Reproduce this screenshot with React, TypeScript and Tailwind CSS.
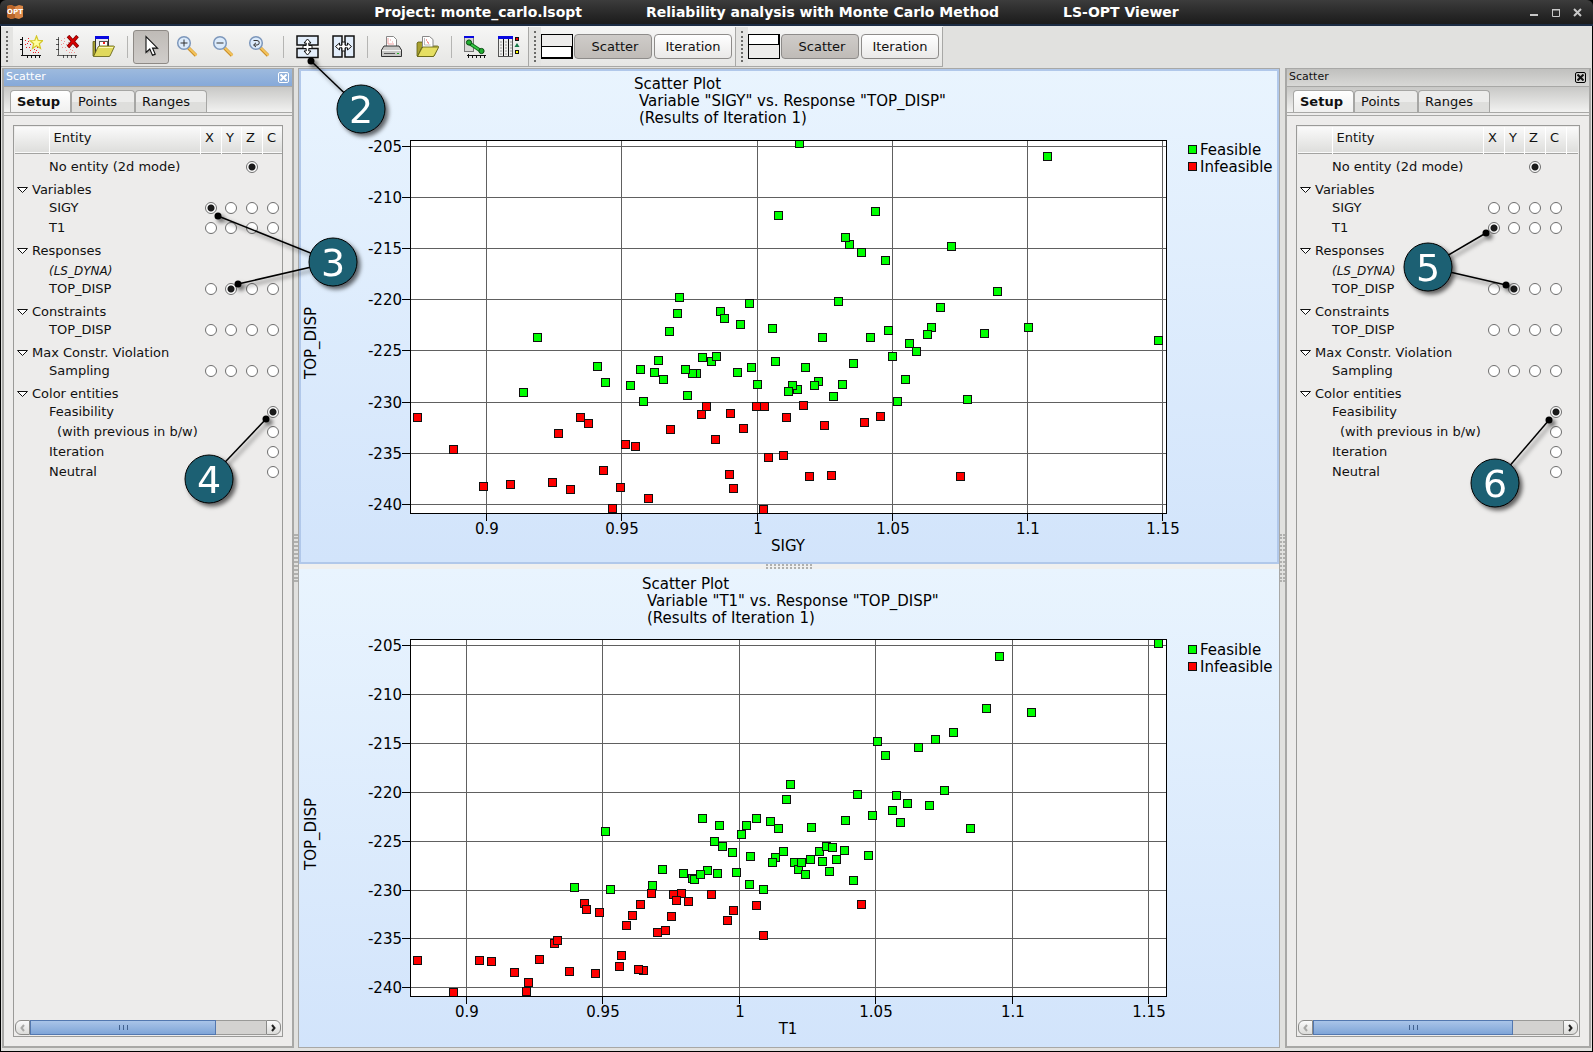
import React, { useState } from 'react';

type Point = [number, number];

interface Tick {
  pos: number;
  label: string;
}

interface ScatterPlotProps {
  title: string[];
  titleX: number;
  titleY: number;
  legendY: number;
  xLabel: string;
  width: number;
  height: number;
  originY: number;
  viewHeight: number;
  xTicks: Tick[];
  yTicks: Tick[];
  feasible: Point[];
  infeasible: Point[];
}

// Marker positions are relative to the top left corner of the plot frame
const SIGY_FEASIBLE: Point[] = [
  [389, 3], [368, 75], [269, 157], [267, 173], [259, 191], [127, 197], [339, 163], [310, 171],
  [314, 178], [330, 184], [362, 188], [248, 220], [187, 226], [195, 242], [230, 229], [244, 232],
  [220, 245], [253, 239], [113, 252], [233, 261], [286, 233], [282, 233], [275, 229], [301, 221],
  [292, 217], [306, 216], [327, 232], [341, 227], [347, 244], [365, 221], [277, 255], [387, 249],
  [382, 245], [378, 251], [637, 16], [465, 71], [439, 104], [435, 97], [451, 112], [475, 120],
  [541, 106], [587, 151], [428, 161], [530, 167], [521, 187], [517, 194], [478, 190], [412, 197],
  [460, 197], [499, 203], [506, 211], [574, 193], [618, 187], [748, 200], [482, 216], [443, 223],
  [395, 227], [408, 241], [404, 245], [432, 244], [423, 256], [495, 239], [487, 261], [557, 259],
];

const SIGY_INFEASIBLE: Point[] = [
  [7, 277], [43, 309], [73, 346], [100, 344], [148, 293], [170, 277], [178, 283], [142, 342],
  [160, 349], [193, 330], [215, 304], [225, 306], [210, 347], [202, 368], [238, 358], [260, 289],
  [291, 274], [296, 266], [320, 273], [305, 299], [333, 288], [346, 266], [354, 266], [376, 277],
  [373, 315], [358, 317], [319, 334], [323, 348], [353, 369], [393, 265], [414, 285], [454, 282],
  [470, 276], [399, 336], [421, 335], [550, 336],
];

const T1_FEASIBLE: Point[] = [
  [380, 145], [376, 160], [292, 179], [309, 186], [346, 179], [336, 186], [360, 182], [368, 189],
  [331, 195], [195, 192], [304, 202], [312, 207], [322, 213], [340, 217], [365, 218], [373, 212],
  [362, 223], [252, 230], [273, 234], [282, 239], [284, 240], [297, 231], [290, 235], [307, 234],
  [326, 233], [164, 248], [200, 250], [242, 246], [339, 245], [353, 250], [384, 223], [388, 230],
  [391, 223], [395, 235], [589, 17], [748, 4], [576, 69], [621, 73], [543, 93], [525, 100],
  [508, 108], [467, 102], [475, 116], [447, 155], [486, 156], [497, 164], [534, 151], [519, 166],
  [482, 171], [462, 176], [490, 183], [435, 181], [401, 188], [560, 189], [409, 212], [416, 207],
  [422, 208], [434, 211], [400, 220], [412, 222], [426, 220], [458, 216], [419, 232], [443, 241],
];

const T1_INFEASIBLE: Point[] = [
  [7, 321], [43, 353], [69, 321], [81, 322], [104, 333], [118, 343], [116, 352], [129, 320],
  [144, 304], [147, 301], [159, 332], [185, 334], [174, 264], [176, 270], [189, 273], [209, 327],
  [211, 316], [233, 331], [228, 330], [216, 286], [222, 276], [230, 265], [241, 254], [255, 291],
  [247, 293], [261, 277], [263, 255], [271, 254], [266, 261], [278, 262], [301, 255], [317, 281],
  [323, 271], [346, 266], [353, 296], [451, 265],
];

const Y_LABELS = ['-205', '-210', '-215', '-220', '-225', '-230', '-235', '-240'];
const X_LABELS = ['0.9', '0.95', '1', '1.05', '1.1', '1.15'];

const makeTicks = (labels: string[], positions: number[]): Tick[] =>
  labels.map((label, i) => ({ label, pos: positions[i] }));

const ScatterPlot: React.FC<ScatterPlotProps> = ({
  title, titleX, titleY, legendY, xLabel, width, height, originY, viewHeight, xTicks, yTicks, feasible, infeasible,
}) => {
  const clipId = `clip-${xLabel}`;

  const renderMarkers = (points: Point[], fill: string) =>
    points.map(([x, y], i) => (
      <rect key={i} x={x - 3.5} y={y - 3.5} width={8} height={8} fill={fill} stroke="#101010" />
    ));

  return (
    <svg
      viewBox={`-109 ${-originY} 976 ${viewHeight}`}
      className="block h-full w-full text-[15px]"
      role="img"
      aria-label={title.join(' ')}
    >
      <defs>
        <clipPath id={clipId}>
          <rect x={0} y={0} width={width + 1} height={height + 1} />
        </clipPath>
      </defs>

      {title.map((line, i) => (
        <text key={line} x={titleX + (i > 0 ? 5 : 0)} y={titleY + i * 17}>{line}</text>
      ))}

      <rect x={0.5} y={0.5} width={width} height={height} fill="#fff" />
      <g stroke="#606060">
        {xTicks.map(t => <line key={t.label} x1={t.pos + 0.5} x2={t.pos + 0.5} y1={0} y2={height} />)}
        {yTicks.map(t => <line key={t.label} y1={t.pos + 0.5} y2={t.pos + 0.5} x1={0} x2={width} />)}
      </g>
      <g clipPath={`url(#${clipId})`}>
        {renderMarkers(infeasible, '#f00')}
        {renderMarkers(feasible, '#0f0')}
      </g>
      <g stroke="#000">
        <rect x={0.5} y={0.5} width={width} height={height} fill="none" />
        {xTicks.map(t => <line key={t.label} x1={t.pos + 0.5} x2={t.pos + 0.5} y1={height} y2={height + 8} />)}
        {yTicks.map(t => <line key={t.label} y1={t.pos + 0.5} y2={t.pos + 0.5} x1={-8} x2={0} />)}
      </g>

      <g textAnchor="middle">
        {xTicks.map(t => <text key={t.label} x={t.pos + 1} y={height + 21}>{t.label}</text>)}
        <text x={378} y={height + 38}>{xLabel}</text>
        <text transform={`translate(-94 ${Math.round(height / 2) + 16}) rotate(-90)`}>TOP_DISP</text>
      </g>
      <g textAnchor="end">
        {yTicks.map(t => <text key={t.label} x={-8} y={t.pos + 6}>{t.label}</text>)}
      </g>

      <rect x={778.5} y={legendY + 0.5} width={8} height={8} fill="#0f0" stroke="#101010" />
      <text x={790} y={legendY + 10}>Feasible</text>
      <rect x={778.5} y={legendY + 17.5} width={8} height={8} fill="#f00" stroke="#101010" />
      <text x={790} y={legendY + 27}>Infeasible</text>
    </svg>
  );
};

interface EntityRow {
  label: string;
  kind?: 'group' | 'note' | 'none';
  indent?: boolean;
  columns?: string;
}

const ROWS: EntityRow[] = [
  { label: 'No entity (2d mode)', kind: 'none', columns: 'Z' },
  { label: 'Variables', kind: 'group' },
  { label: 'SIGY', columns: 'XYZC' },
  { label: 'T1', columns: 'XYZC' },
  { label: 'Responses', kind: 'group' },
  { label: '(LS_DYNA)', kind: 'note' },
  { label: 'TOP_DISP', columns: 'XYZC' },
  { label: 'Constraints', kind: 'group' },
  { label: 'TOP_DISP', columns: 'XYZC' },
  { label: 'Max Constr. Violation', kind: 'group' },
  { label: 'Sampling', columns: 'XYZC' },
  { label: 'Color entities', kind: 'group' },
  { label: 'Feasibility', columns: 'C' },
  { label: '(with previous in b/w)', indent: true, columns: 'C' },
  { label: 'Iteration', columns: 'C' },
  { label: 'Neutral', columns: 'C' },
];

const AXES = ['X', 'Y', 'Z', 'C'];

interface EntityTableProps {
  id: string;
  initial: Record<string, number>;
}

const EntityTable: React.FC<EntityTableProps> = ({ id, initial }) => {
  const [selected, setSelected] = useState<Record<string, number>>(initial);

  return (
    <table className="w-full table-fixed border-collapse">
      <colgroup>
        <col className="w-[34px]" />
        <col className="w-[151px]" />
        <col className="w-[21px]" />
        <col className="w-[20px]" />
        <col className="w-[21px]" />
        <col className="w-[21px]" />
        <col />
      </colgroup>
      <thead>
        <tr className="h-[26px] border-b border-[#a3a3a1] bg-linear-to-b from-[#fafafa] to-[#dededc] leading-4">
          <th className="p-0" />
          <th className="border-l border-white p-0 pb-1 pl-1 text-left font-normal">Entity</th>
          {AXES.map(axis => (
            <th key={axis} className="border-l border-white p-0 pr-[2px] pb-1 text-center font-normal">{axis}</th>
          ))}
          <th className="border-l border-white p-0" />
        </tr>
      </thead>
      <tbody>
        {ROWS.map((row, index) => {
          if (row.kind === 'group') {
            return (
              <tr key={index} className="h-[21px]">
                <td colSpan={7} className="p-0 pt-1 leading-4">
                  <button className="flex items-center gap-[3px] pl-px">
                    <svg viewBox="0 0 13 8" className="h-2 w-[13px]" fill="#fff" stroke="#111">
                      <path d="M1.5 1.5h10l-5 5z" />
                    </svg>
                    {row.label}
                  </button>
                </td>
              </tr>
            );
          }
          return (
            <tr key={index} className={row.kind === 'none' ? 'h-6' : 'h-5'}>
              <td className="p-0" />
              <th
                scope="row"
                className={`overflow-visible p-0 text-left font-normal leading-4 whitespace-nowrap ${row.indent ? 'pl-2' : ''} ${row.kind === 'none' ? 'pt-1' : ''} ${row.kind === 'note' ? 'pt-1 text-[12px] italic' : ''}`}
              >
                {row.label}
              </th>
              {AXES.map(axis => (
                <td key={axis} className={`p-0 ${row.kind === 'none' ? 'pt-1' : ''}`}>
                  {row.columns?.includes(axis) && (
                    <input
                      type="radio"
                      name={`${id}-${axis}`}
                      aria-label={`${row.label} ${axis}`}
                      checked={selected[axis] === index}
                      onChange={() => setSelected({ ...selected, [axis]: index })}
                      className="mx-auto block size-3 appearance-none rounded-full border border-[#6e6e6e] bg-white checked:bg-[radial-gradient(circle,#1a1a1a_3px,#fff_4px)]"
                    />
                  )}
                </td>
              ))}
              <td className="p-0" />
            </tr>
          );
        })}
      </tbody>
    </table>
  );
};

interface DockProps {
  id: string;
  active?: boolean;
  className: string;
  thumbClass: string;
  initial: Record<string, number>;
}

const Dock: React.FC<DockProps> = ({ id, active, className, thumbClass, initial }) => {
  const tabClass = 'h-[22px] rounded-t border border-b-0 border-[#a6a6a4] text-left';
  const idleTab = 'bg-linear-to-b from-[#ececeb] from-50% to-[#dededc] to-50%';

  return (
    <aside className={`flex flex-shrink-0 flex-col border-2 border-t border-[#a8a8a6] bg-[#edeceb] ${className}`}>
      <div
        className={`flex h-[17px] items-center justify-between pr-[3px] pb-px pl-[2px] text-[11px] ${
          active
            ? 'bg-linear-to-b from-[#9dbade] to-[#86a9d9] text-white'
            : 'bg-linear-to-b from-[#c0c0be] to-[#d8d8d6] text-[#111]'
        }`}
      >
        <span>Scatter</span>
        <button
          aria-label="Close panel"
          className={`flex size-[11px] items-center justify-center rounded-xs border ${active ? 'border-white' : 'border-black'}`}
        >
          <svg viewBox="0 0 7 7" className="size-[7px]" stroke="currentColor" strokeWidth="2">
            <path d="M.5.5l6 6M6.500.5l-6 6" />
          </svg>
        </button>
      </div>
      <div role="tablist" className="flex h-[27px] items-end border-t border-b border-[#a8a8a6] bg-linear-to-b from-[#c8c8c6] to-[#f2f2f1] pl-[6px]">
        <button role="tab" aria-selected="true" className={`${tabClass} w-[61px] bg-linear-to-b from-white to-[#f0f0ef] pl-[6px] font-bold`}>
          Setup
        </button>
        <button role="tab" aria-selected="false" className={`${tabClass} ${idleTab} w-16 pl-[6px]`}>Points</button>
        <button role="tab" aria-selected="false" className={`${tabClass} ${idleTab} w-[72px] pl-[6px]`}>Ranges</button>
      </div>
      <div className="h-[3px] border-b border-[#a8a8a6]" />
      <div className="flex min-h-0 flex-1 flex-col px-[9px] pt-[9px] pb-[9px]">
        <div className="flex min-h-0 flex-1 flex-col overflow-hidden border border-[#9a9a98] p-px">
          <EntityTable id={id} initial={initial} />
          <div className="mt-auto flex h-[15px]">
            <button aria-label="Scroll left" className="flex w-[15px] items-center justify-center rounded-l-md border border-[#8a8a88] bg-linear-to-b from-[#fafafa] to-[#dcdcda]">
              <svg viewBox="0 0 5 8" className="h-2 w-[5px]" fill="none" stroke="#a8a8a6" strokeWidth="2">
                <path d="M4 1L1.500 4 4 7" />
              </svg>
            </button>
            <div className="flex-1 border-y border-[#9a9a98] bg-[#d3d2d0]">
              <div className={`-my-px flex h-[15px] items-center justify-center gap-[3px] border border-[#5378b0] bg-linear-to-b from-[#a9c4e8] to-[#7fa5d8] ${thumbClass}`}>
                <span className="h-[5px] w-px bg-[#41618f]" />
                <span className="h-[5px] w-px bg-[#41618f]" />
                <span className="h-[5px] w-px bg-[#41618f]" />
              </div>
            </div>
            <button aria-label="Scroll right" className="flex w-[15px] items-center justify-center rounded-r-md border border-[#8a8a88] bg-linear-to-b from-[#fafafa] to-[#dcdcda]">
              <svg viewBox="0 0 5 8" className="h-2 w-[5px]" fill="none" stroke="#222" strokeWidth="2">
                <path d="M1 1l2.500 3L1 7" />
              </svg>
            </button>
          </div>
        </div>
      </div>
    </aside>
  );
};

const Axes: React.FC = () => (
  <path d="M2.500 2v18M1 20.500h20M0 4.500h3M0 9.500h3M0 14.500h3M7.500 20v3M11.500 20v3M15.500 20v3M19.500 20v3" stroke="#111" fill="none" />
);

const RedDots: React.FC<{ color: string }> = ({ color }) => (
  <g fill={color}>
    {[[5, 5], [8, 3], [7, 8], [10, 9], [6, 12], [9, 12], [12, 12], [14, 14], [10, 15], [16, 15], [17, 12], [13, 17], [18, 17], [12, 7], [5, 9], [8, 6], [15, 17]].map(([x, y]) => (
      <rect key={`${x}-${y}`} x={x} y={y} width={1} height={1} />
    ))}
  </g>
);

const iconClass = 'size-[23px]';

const NewPlotIcon: React.FC = () => (
  <svg viewBox="0 0 23 23" className={iconClass}>
    <Axes />
    <RedDots color="#f02020" />
    <path d="M16.500 1l1.700 4.500 4.600.2-3.500 3 1.200 4.800-4-2.700-4 2.700 1.200-4.800-3.500-3 4.600-.2z" fill="#ffffa0" stroke="#d4c72a" strokeWidth="1.200" />
  </svg>
);

const DeletePlotIcon: React.FC = () => (
  <svg viewBox="0 0 23 23" className={iconClass}>
    <g opacity=".65"><Axes /></g>
    <RedDots color="#f29090" />
    <path d="M12 1l10 11M21.500 1L12 12" stroke="#7a0000" strokeWidth="3.500" fill="none" />
    <path d="M12.500 1.500l9 10M21 1.500l-8.500 10" stroke="#d80000" strokeWidth="2" fill="none" />
  </svg>
);

const Folder: React.FC = () => (
  <g stroke="#5c5a10" strokeWidth=".8">
    <path d="M1 21V8l1-1h4l1 2h9v12z" fill="#a8a030" />
    <path d="M1.500 21.500L6 12l1-1h14.500l1 .5L18 21l-1 .5z" fill="#e6df62" />
    <path d="M7 12.500h14" stroke="#fbf8b8" />
  </g>
);

const OpenPlotIcon: React.FC = () => (
  <svg viewBox="0 0 23 23" className={iconClass}>
    <path d="M1 21V6.500h3V20z" fill="#a8a030" stroke="#5c5a10" strokeWidth=".8" />
    <rect x={3.500} y={1.500} width={13} height={16} fill="#e8e8f0" stroke="#333" />
    <rect x={3} y={1} width={14} height={3} fill="#0808e0" />
    <rect x={7.500} y={6.500} width={8} height={7} fill="#fff" stroke="#555" />
    <rect x={11} y={7} width={2} height={2} fill="#f02020" />
    <path d="M1.500 21.500L6 12l1-1h14.500l1 .5L18 21l-1 .5z" fill="#e0d95c" stroke="#5c5a10" strokeWidth=".8" />
    <path d="M7 12.500h14" stroke="#fbf8b8" />
  </svg>
);

const CursorIcon: React.FC = () => (
  <svg viewBox="0 0 23 23" className={iconClass}>
    <path d="M7 3v16l4-3.800 2.600 6 2.600-1.200-2.600-5.700H19z" fill="#888" opacity=".5" />
    <path d="M6 1.500v16l3.800-3.500 2.700 6.300 2.700-1.200-2.700-6H17.500z" fill="#fff" stroke="#111" strokeWidth="1.100" />
  </svg>
);

const ZoomIcon: React.FC<{ children: React.ReactNode }> = ({ children }) => (
  <svg viewBox="0 0 23 23" className={iconClass}>
    <path d="M12 12.500l8 8" stroke="#c98d28" strokeWidth="3.400" />
    <path d="M12.500 12.500l8 8" stroke="#f4c45c" strokeWidth="2" />
    <circle cx={8} cy={8} r={6.300} fill="#dcebfb" stroke="#7d97bb" strokeWidth="1.500" />
    <g stroke="#333" fill="none">{children}</g>
  </svg>
);

const SplitVerticalIcon: React.FC = () => (
  <svg viewBox="0 0 23 24" className="h-6 w-[23px]">
    <rect x={1} y={1} width={21} height={9} fill="#e3eefb" stroke="#111" strokeWidth="1.500" />
    <rect x={1} y={13.500} width={21} height={9} fill="#e3eefb" stroke="#111" strokeWidth="1.500" />
    <path d="M11.500 4l3.500 4h-2.200v2.500H16v3h-3.200V16H15l-3.500 4L8 16h2.200v-2.500H7v-3h3.200V8H8z" fill="#fff" stroke="#111" />
  </svg>
);

const SplitHorizontalIcon: React.FC = () => (
  <svg viewBox="0 0 23 23" className={iconClass}>
    <rect x={1} y={1} width={9} height={21} fill="#e3eefb" stroke="#111" strokeWidth="1.500" />
    <rect x={13} y={1} width={9} height={21} fill="#e3eefb" stroke="#111" strokeWidth="1.500" />
    <path d="M3.500 11.500l4-3.500v2.200H10V7h3v3.200h2.500V8l4 3.500-4 3.500v-2.200H13V16h-3v-3.200H7.500V15z" fill="#fff" stroke="#111" />
  </svg>
);

const PrinterIcon: React.FC = () => (
  <svg viewBox="0 0 23 23" className={iconClass}>
    <path d="M6.500 12V1.500h7l3 3V12z" fill="#fff" stroke="#888" />
    <path d="M8 3v6h6M10 5h1M12 7h1" stroke="#f0a0a0" fill="none" />
    <path d="M4 11h15l2.500 4v6.500h-20V15z" fill="#c9c9c7" stroke="#333" />
    <path d="M2 15.500h19" stroke="#f4f4f4" />
    <path d="M4 18.500h11" stroke="#555" />
    <rect x={17} y={18} width={2} height={1} fill="#1bb01b" />
  </svg>
);

const ExportIcon: React.FC = () => (
  <svg viewBox="0 0 23 23" className={iconClass}>
    <Folder />
    <path d="M6.500 14V1.500h7l3.500 3V14z" fill="#fff" stroke="#888" />
    <path d="M8.500 3v7h6" stroke="#bbb" fill="none" />
    <path d="M10 5h1M12 8h1M11 7h1" stroke="#f04040" />
    <path d="M1.500 21.500L6 13l1-1h14.500l1 .5L18 21l-1 .5z" fill="#e6df62" stroke="#5c5a10" strokeWidth=".8" />
  </svg>
);

const PlotSetupIcon: React.FC = () => (
  <svg viewBox="0 0 23 23" className={iconClass}>
    <rect x={1.500} y={1.500} width={9} height={15} fill="#d9d9d7" stroke="#777" />
    <rect x={1} y={1} width={10} height={2} fill="#0808e0" />
    <path d="M4 20.500h19M5.500 19v4M9.500 20v3M13.500 20v3M17.500 20v3M21.500 20v3" stroke="#111" fill="none" />
    <path d="M6 8l12 8" stroke="#0b6b16" strokeWidth="3.500" />
    <path d="M6 8l12 8" stroke="#35c545" strokeWidth="1.800" />
    <circle cx={6} cy={7.500} r={2.600} fill="#1fae30" stroke="#0a4a10" />
    <circle cx={18.500} cy={16} r={2.600} fill="#1fae30" stroke="#0a4a10" />
  </svg>
);

const TableSetupIcon: React.FC = () => (
  <svg viewBox="0 0 23 23" className={iconClass}>
    <rect x={1.500} y={2.500} width={14} height={19} fill="#efefed" stroke="#555" />
    <rect x={1} y={1} width={15} height={3} fill="#0808e0" />
    <path d="M6.500 4v17M11.500 4v17" stroke="#111" />
    <path d="M3 7h2M3 10h2M3 13h2M3 16h2M3 19h2M8 7h2M8 10h2M8 13h2M8 16h2M8 19h2M13 7h2M13 10h2M13 13h2M13 16h2M13 19h2" stroke="#999" />
    <rect x={18.500} y={2.500} width={3} height={3} fill="#e00" stroke="#111" />
    <path d="M20 8l2.500 4h-5z" fill="#167a4a" />
    <rect x={18.500} y={15.500} width={3} height={3} fill="#ff0" stroke="#111" />
  </svg>
);

interface ToolButtonProps {
  label: string;
  pressed?: boolean;
  narrow?: boolean;
  children: React.ReactNode;
}

const ToolButton: React.FC<ToolButtonProps> = ({ label, pressed, narrow, children }) => (
  <button
    aria-label={label}
    aria-pressed={pressed}
    className={`flex h-[34px] items-center justify-center rounded-[3px] ${narrow ? 'w-[34px]' : 'w-9'} ${
      pressed ? 'border border-[#8e8a86] bg-linear-to-b from-[#bfbbb7] to-[#d0cdca]' : ''
    }`}
  >
    {children}
  </button>
);

const ToolSeparator: React.FC = () => (
  <div className="flex w-3 justify-center">
    <div className="h-[22px] w-px bg-[#b5b5b3]" />
  </div>
);

const ToolHandle: React.FC = () => (
  <div className="flex h-full w-3 flex-shrink-0 items-center justify-center bg-[#e4e4e2]">
    <div className="h-[31px] w-0 border-l-2 border-dotted border-[#6a6a68]" />
  </div>
);

const PlotToolbar: React.FC<{ pane: 'top' | 'bottom' }> = ({ pane }) => {
  const buttonClass = 'h-[25px] w-[78px] rounded-[4px] border border-[#8e8c8a]';

  return (
    <div className="flex h-full flex-shrink-0 items-center border-r border-[#a8a8a6] pr-[3px]">
      <ToolHandle />
      <svg viewBox="0 0 32 25" className="h-[25px] w-8" stroke="#000">
        <rect x={0.500} y={0.500} width={31} height={24} fill="#edeceb" />
        {pane === 'bottom' ? (
          <>
            <rect x={0.500} y={12.500} width={31} height={12} fill="#fff" />
            <path d="M31 12v12H0" fill="none" strokeWidth={2} />
          </>
        ) : (
          <>
            <rect x={0.500} y={0.500} width={31} height={10} fill="#fff" />
            <path d="M31 0v10.500" fill="none" strokeWidth={2} />
          </>
        )}
      </svg>
      <div className="flex gap-[2px] pl-px">
        <button aria-pressed="true" className={`${buttonClass} bg-linear-to-b from-[#cfccc9] to-[#bfbbb7] pl-1`}>
          Scatter
        </button>
        <button aria-pressed="false" className={`${buttonClass} bg-linear-to-b from-white to-[#eae9e8]`}>Iteration</button>
      </div>
    </div>
  );
};

interface CalloutProps {
  label: string;
  center: Point;
  targets: Point[];
}

// Numbered bubble with leader lines running to the controls it explains
const Callout: React.FC<CalloutProps> = ({ label, center, targets }) => (
  <g filter="url(#callout-shadow)">
    {targets.map(([x, y]) => (
      <g key={`${x}-${y}`}>
        <line x1={center[0]} y1={center[1]} x2={x} y2={y} stroke="#000" strokeWidth="1.500" />
        <circle cx={x} cy={y} r={3.500} fill="#000" />
      </g>
    ))}
    <circle cx={center[0]} cy={center[1]} r={24} fill="#1c6073" stroke="#000" />
    <text x={center[0]} y={center[1] + 14} textAnchor="middle" fill="#fff" fontSize={38}>{label}</text>
  </g>
);

const App: React.FC = () => {
  return (
    <div className="relative flex h-screen flex-col overflow-hidden border-b border-black bg-black font-['DejaVu_Sans',sans-serif] text-[13px] text-[#111]">
      <header className="flex h-[26px] flex-shrink-0 items-center rounded-t-md border-b-2 border-b-[#1c2c44] bg-linear-to-b from-[#3c3c3c] to-[#1b1b1b] pr-[11px] pl-[6px] text-white">
        <svg viewBox="0 0 18 16" className="h-4 w-[18px]">
          <path d="M1 2l4-1 4 1.500L13 1l4 1v11l-4 2-4-1-4 1-4-2z" fill="#d98646" />
          <path d="M1 2l4-1 4 1.500V14l-4 1-4-2z" fill="#b9652a" />
          <text x="9" y="10" textAnchor="middle" fontSize="7" fontWeight="bold" fill="#fff">OPT</text>
        </svg>
        <h1 className="flex flex-1 justify-center gap-16 text-[14px] font-bold">
          <span>Project: monte_carlo.lsopt</span>
          <span>Reliability analysis with Monte Carlo Method</span>
          <span>LS-OPT Viewer</span>
        </h1>
        <div className="flex gap-[13px] text-[#c8c8c8]">
          <button aria-label="Minimize">
            <svg viewBox="0 0 9 9" className="size-[9px]"><rect x={1} y={6} width={8} height={2} fill="currentColor" /></svg>
          </button>
          <button aria-label="Maximize">
            <svg viewBox="0 0 9 9" className="size-[9px]" fill="none" stroke="currentColor">
              <path d="M1.500 1v7.500h7V1M1 1.500h8" /><path d="M1 2h8" />
            </svg>
          </button>
          <button aria-label="Close">
            <svg viewBox="0 0 9 9" className="size-[9px]" stroke="currentColor" strokeWidth="2"><path d="M1 1l7 7M8 1L1 8" /></svg>
          </button>
        </div>
      </header>

      <div className="mx-px flex min-h-0 flex-1 flex-col bg-[#e1e1df]">
        <div className="flex h-[42px] flex-shrink-0 items-start">
          <div className="flex h-[41px] items-center border-b border-[#a8a8a6] bg-linear-to-b from-[#f6f6f5] to-[#e6e6e4] pt-px">
            <div className="flex h-full items-center border-r border-[#a8a8a6] pr-[3px]">
              <ToolHandle />
              <ToolButton label="New plot"><NewPlotIcon /></ToolButton>
              <ToolButton label="Delete plot"><DeletePlotIcon /></ToolButton>
              <ToolButton label="Open plot"><OpenPlotIcon /></ToolButton>
              <ToolSeparator />
              <ToolButton label="Select" pressed><CursorIcon /></ToolButton>
              <ToolButton label="Zoom in"><ZoomIcon><path d="M4.500 8h7M8 4.500v7" /></ZoomIcon></ToolButton>
              <ToolButton label="Zoom out"><ZoomIcon><path d="M4.500 8h7" /></ZoomIcon></ToolButton>
              <ToolButton label="Reset zoom">
                <ZoomIcon><path d="M5.500 5.500H9a2 2 0 0 1 0 4.500H6M8 7.800L5.500 10 8 12" /></ZoomIcon>
              </ToolButton>
              <ToolSeparator />
              <ToolButton label="Split vertically"><SplitVerticalIcon /></ToolButton>
              <ToolButton label="Split horizontally"><SplitHorizontalIcon /></ToolButton>
              <ToolSeparator />
              <ToolButton label="Print"><PrinterIcon /></ToolButton>
              <ToolButton label="Export"><ExportIcon /></ToolButton>
              <ToolSeparator />
              <ToolButton label="Plot setup" narrow><PlotSetupIcon /></ToolButton>
              <ToolButton label="Table setup" narrow><TableSetupIcon /></ToolButton>
            </div>
            <PlotToolbar pane="bottom" />
            <PlotToolbar pane="top" />
          </div>
        </div>

        <div className="mr-px flex min-h-0 flex-1 pb-[3px] pl-px">
          <Dock id="left" active className="w-[292px]" thumbClass="w-[79%]" initial={{ X: 2, Y: 6, Z: 0, C: 12 }} />
          <div className="flex w-1 flex-shrink-0 items-center">
            <div className="h-12 w-full border-x-2 border-dotted border-[#b0b0ae]" />
          </div>
          <main className="grid min-w-0 flex-1 grid-rows-[495fr_5px_478fr] border border-[#a8a8a6] bg-[#f0f0ef]">
            <section className="min-h-0 border-2 border-[#b1c8ea] bg-linear-to-b from-[#e9f4fe] to-[#d2e4fb]">
              <ScatterPlot
                title={['Scatter Plot', 'Variable "SIGY" vs. Response "TOP_DISP"', '(Results of Iteration 1)']}
                titleX={224}
                titleY={-51}
                legendY={5}
                xLabel="SIGY"
                width={756}
                height={373}
                originY={69}
                viewHeight={491}
                xTicks={makeTicks(X_LABELS, [76, 211, 347, 482, 617, 752])}
                yTicks={makeTicks(Y_LABELS, [6, 57, 108, 159, 210, 262, 313, 364])}
                feasible={SIGY_FEASIBLE}
                infeasible={SIGY_INFEASIBLE}
              />
            </section>
            <div className="flex justify-center">
              <div className="h-full w-[46px] border-y-2 border-dotted border-[#b0b0ae]" />
            </div>
            <section className="min-h-0 bg-linear-to-b from-[#e9f4fe] to-[#d2e4fb] px-[2px]">
              <ScatterPlot
                title={['Scatter Plot', 'Variable "T1" vs. Response "TOP_DISP"', '(Results of Iteration 1)']}
                titleX={232}
                titleY={-50}
                legendY={6}
                xLabel="T1"
                width={756}
                height={357}
                originY={70}
                viewHeight={478}
                xTicks={makeTicks(X_LABELS, [56, 192, 329, 465, 602, 738])}
                yTicks={makeTicks(Y_LABELS, [6, 55, 104, 153, 202, 251, 299, 348])}
                feasible={T1_FEASIBLE}
                infeasible={T1_INFEASIBLE}
              />
            </section>
          </main>
          <div className="flex w-[5px] flex-shrink-0 items-center">
            <div className="h-12 w-full border-x-2 border-dotted border-[#b0b0ae]" />
          </div>
          <Dock id="right" className="w-[306px]" thumbClass="w-[80%]" initial={{ X: 3, Y: 6, Z: 0, C: 12 }} />
        </div>
      </div>

      <svg width={400} height={520} className="pointer-events-none absolute top-0 left-0">
        <defs>
          <filter id="callout-shadow" x="-20%" y="-20%" width="150%" height="150%">
            <feDropShadow dx={3} dy={3} stdDeviation={2} floodColor="#000" floodOpacity={0.6} />
          </filter>
        </defs>
        <Callout label="2" center={[361, 109]} targets={[[311, 61]]} />
        <Callout label="3" center={[333, 262]} targets={[[218, 216], [238, 284]]} />
        <Callout label="4" center={[209, 479]} targets={[[266, 419]]} />
      </svg>
      <svg width={200} height={520} className="pointer-events-none absolute top-0 right-0">
        <Callout label="5" center={[35, 267]} targets={[[93, 233], [113, 285]]} />
        <Callout label="6" center={[102, 483]} targets={[[156, 420]]} />
      </svg>
    </div>
  );
};

export default App;
